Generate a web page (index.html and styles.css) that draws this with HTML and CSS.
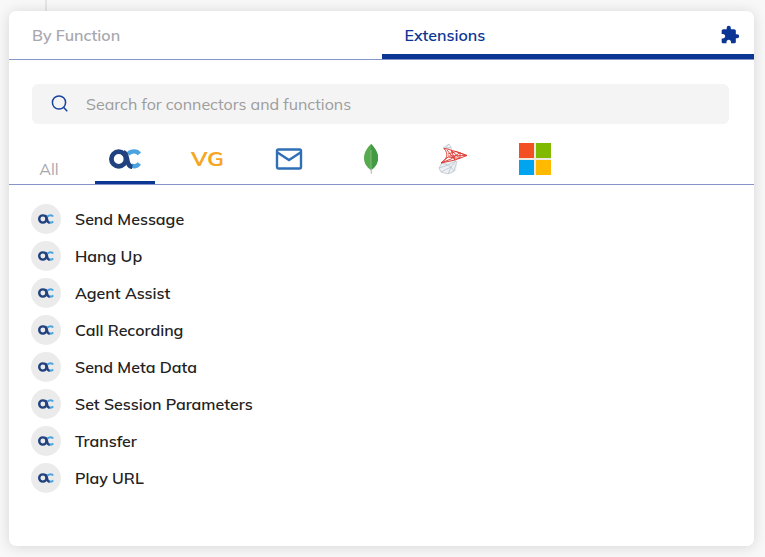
FILE: index.html
```html
<!DOCTYPE html>
<html lang="en">
<head>
<meta charset="utf-8">
<title>Extensions</title>
<link rel="stylesheet" href="styles.css">
</head>
<body>
<svg class="defs" width="0" height="0" aria-hidden="true">
  <symbol id="ac" viewBox="0 0 32 20">
    <path d="M19 5C21 2.900 23 2.400 25.200 2.400c2.400 0 4 1 5.100 2.600M22.500 16.300c3 1.600 6 .7 7.800-1.700" fill="none" stroke="#4ba3e0" stroke-width="4.200"/>
    <ellipse cx="9.700" cy="10" rx="7.300" ry="7.300" fill="none" stroke="#21427f" stroke-width="4.800"/>
    <path d="M14.600 3.200c2.700 1.200 3 4 3.500 7.200.5 3.900 1.800 6.900 5.200 7.500" fill="none" stroke="#21427f" stroke-width="4.600"/>
  </symbol>
</svg>
<main class="panel">
  <nav class="tabs">
    <div class="tab"><span>By Function</span></div>
    <div class="tab tab-active"><span>Extensions</span>
      <svg class="puzzle" viewBox="0 0 24 24"><path d="M20.500 11H19V7c0-1.100-.9-2-2-2h-4V3.500a2.500 2.500 0 0 0-5 0V5H4c-1.100 0-1.990.9-1.990 2v3.800H3.500c1.490 0 2.700 1.210 2.700 2.700s-1.210 2.700-2.700 2.700H2V20c0 1.100.9 2 2 2h3.800v-1.500c0-1.490 1.210-2.700 2.700-2.700s2.700 1.210 2.700 2.700V22H17c1.100 0 2-.9 2-2v-4h1.500a2.500 2.500 0 0 0 0-5z"/></svg>
    </div>
  </nav>
  <div class="search">
    <svg class="lens" viewBox="0 0 18 18"><circle cx="8" cy="7.500" r="6.600"/><path d="M12.500 12.300l3.700 3.900"/></svg>
    <span>Search for connectors and functions</span>
  </div>
  <nav class="brands">
    <div class="brand all"><span>All</span></div>
    <div class="brand selected"><svg width="32" height="20"><use href="#ac"/></svg></div>
    <div class="brand"><svg width="44" height="28" viewBox="0 0 44 28"><text class="vg" x="6" y="21" textLength="33" lengthAdjust="spacingAndGlyphs">VG</text></svg></div>
    <div class="brand"><svg width="28" height="24" viewBox="0 0 28 24" fill="none" stroke="#2f6fb5" stroke-width="2.400"><rect x="2" y="2.500" width="24" height="19" rx="1.500"/><path d="M2.500 5.500L14 13l11.500-7.500"/></svg></div>
    <div class="brand"><svg width="16" height="32" viewBox="0 0 16 32"><path d="M8 1C4 5 1 9.500 1 15s3 9 6.500 12h1C12 24 15 20.500 15 15S12 5 8 1z" fill="#56ab50"/><path d="M8 1c4 4 7 8.500 7 14s-3 9-6.500 12H8z" fill="#439944"/><path d="M8 7v18" stroke="#91bf80" stroke-width=".8"/><path d="M7.500 25.500h1.300l.2 5.300H7.800z" fill="#c2bfb0"/></svg></div>
    <div class="brand"><svg width="32" height="32" viewBox="0 0 32 32" fill="none" stroke-linejoin="round">
      <path d="M5 20l5-3 9-1 1 6-1 6-5 3-7-1-5-3 1-4z" fill="#edf0f3"/>
      <path d="M6 5l6-4 2 3.500-6 1.500zM8 6l4-5M7 5l7-.5 1 2M5 20l-3 5 2 4 7 2 6-3 3-10M5 20l6 2 8-4-5 6-3 7M2 25l9-3 3 2 3 4M4 29l10-5" stroke="#bdc5d0" stroke-width=".8"/>
      <path d="M7 5.500c5 .4 7 2 12 3l11 4-12 4.500-14 3c6-4 8-9 3-14.500zM10 7l8 10M14 7l4 10M14 7l9 8.500V9.500M11 11l8-2.500 11 4-19 .5M11 14l12 1.500M11 14l-7 6 10-4 9-6.500" stroke="#df3c36" stroke-width=".95"/></svg></div>
    <div class="brand"><div class="windows"><i class="red"></i><i class="green"></i><i class="blue"></i><i class="yellow"></i></div></div>
  </nav>
  <ul class="functions">
    <li><b><svg width="16" height="10"><use href="#ac"/></svg></b><span>Send Message</span></li>
    <li><b><svg width="16" height="10"><use href="#ac"/></svg></b><span>Hang Up</span></li>
    <li><b><svg width="16" height="10"><use href="#ac"/></svg></b><span>Agent Assist</span></li>
    <li><b><svg width="16" height="10"><use href="#ac"/></svg></b><span>Call Recording</span></li>
    <li><b><svg width="16" height="10"><use href="#ac"/></svg></b><span>Send Meta Data</span></li>
    <li><b><svg width="16" height="10"><use href="#ac"/></svg></b><span>Set Session Parameters</span></li>
    <li><b><svg width="16" height="10"><use href="#ac"/></svg></b><span>Transfer</span></li>
    <li><b><svg width="16" height="10"><use href="#ac"/></svg></b><span>Play URL</span></li>
  </ul>
</main>
</body>
</html>
```
FILE: styles.css
```css
* { box-sizing: border-box; }
html { height: 100%; }
body {
  height: 557px;
  margin: 0;
  padding: 11px 11px 11px 9px;
  overflow: hidden;
  font: 600 16px/20px Mulish, Muli, Lato, sans-serif;
  background: linear-gradient(#e5e5e5, #e5e5e5) 45px 0 / 2px 20px no-repeat #f8f8f8;
}
.defs { position: absolute; }
svg { display: block; }
.panel {
  height: 535px;
  background: #fff;
  border-radius: 7px;
  box-shadow: 0 1px 14px rgba(0, 0, 0, .14);
}
.tabs { display: flex; height: 49px; border-bottom: 1px solid #8595c8; }
.tab {
  flex: 1;
  display: flex;
  align-items: center;
  justify-content: space-between;
  padding: 0 14px 0 23px;
  color: #a8a8af;
}
.tab-active { color: #0b3694; padding-top: 5px; border-bottom: 5px solid #0b3694; }
.puzzle { width: 20px; height: 20px; fill: #0b3694; }
.search {
  display: flex;
  align-items: center;
  gap: 17px;
  height: 40px;
  margin: 24px 25px 0 23px;
  padding-left: 19px;
  border-radius: 6px;
  background: #f4f4f4;
  color: #9c9c9c;
  font-weight: 400;
}
.lens { width: 18px; height: 18px; fill: none; stroke: #17439d; stroke-width: 1.5; }
.brands { display: flex; gap: 22px; height: 61px; padding-left: 4px; border-bottom: 1px solid #8595c8; }
.brand {
  width: 60px;
  height: 60px;
  padding-top: 10px;
  display: flex;
  align-items: center;
  justify-content: center;
}
.all { padding: 30px 0 0 12px; color: #a8a8af; font-weight: 400; }
.selected { border-bottom: 3px solid #0b3694; padding-top: 13px; }
.vg { font: 700 20px Mulish, Inter, sans-serif; fill: #f5a623; }
.windows { display: grid; grid-template-columns: 15px 15px; grid-auto-rows: 15px; gap: 2px; background: #eee9df; }
.red { background: #f25022; }
.green { background: #7fba00; }
.blue { background: #00a4ef; }
.yellow { background: #ffb900; }
.functions { display: grid; gap: 7px; margin: 19px 0 0; padding: 0 0 0 22px; list-style: none; color: #222; }
.functions li { display: flex; align-items: center; gap: 14px; height: 30px; }
.functions b { display: grid; place-items: center; width: 30px; height: 30px; border-radius: 50%; background: #ebebeb; }
```
